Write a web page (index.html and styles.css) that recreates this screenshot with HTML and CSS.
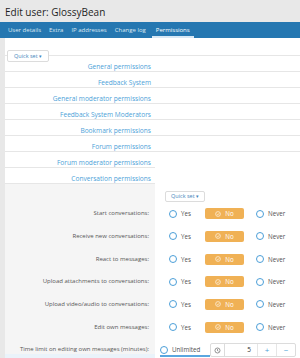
FILE: index.html
```html
<!DOCTYPE html>
<html lang="en">
<head>
    <meta charset="UTF-8" />
    <meta name="viewport" content="width=device-width, initial-scale=1.0" />
    <title>Edit user: GlossyBean</title>
    <link rel="stylesheet" href="styles.css">
</head>
<body>
    <h1 class="page-title">Edit user: GlossyBean</h1>

    <div class="tabs">
        <a class="tab">User details</a>
        <a class="tab">Extra</a>
        <a class="tab">IP addresses</a>
        <a class="tab">Change log</a>
        <a class="tab tab--active">Permissions</a>
    </div>

    <div class="block">
        <div class="block-top">
            <button class="quick-set">Quick set <span class="caret">&#9662;</span></button>
        </div>

        <!-- Permission groups -->
        <ul class="perm-list">
            <li class="perm-row"><span class="perm-link">General permissions</span></li>
            <li class="perm-row"><span class="perm-link">Feedback System</span></li>
            <li class="perm-row"><span class="perm-link">General moderator permissions</span></li>
            <li class="perm-row"><span class="perm-link">Feedback System Moderators</span></li>
            <li class="perm-row"><span class="perm-link">Bookmark permissions</span></li>
            <li class="perm-row"><span class="perm-link">Forum permissions</span></li>
            <li class="perm-row"><span class="perm-link">Forum moderator permissions</span></li>
            <li class="perm-row perm-row--last"><span class="perm-link">Conversation permissions</span></li>
        </ul>

        <div class="form-rows">
            <div class="form-row form-row--head">
                <div class="form-label"></div>
                <div class="form-input">
                    <button class="quick-set">Quick set <span class="caret">&#9662;</span></button>
                </div>
            </div>

            <div class="form-row">
                <div class="form-label">Start conversations:</div>
                <div class="form-input choices">
                    <span class="choice choice--yes"><i class="radio"></i>Yes</span>
                    <span class="choice choice--on"><svg class="check" viewBox="0 0 10 10"><circle cx="5" cy="5" r="4" /><path d="M3 5.2 L4.5 6.6 L7 3.8" /></svg>No</span>
                    <span class="choice"><i class="radio"></i>Never</span>
                </div>
            </div>

            <div class="form-row">
                <div class="form-label">Receive new conversations:</div>
                <div class="form-input choices">
                    <span class="choice choice--yes"><i class="radio"></i>Yes</span>
                    <span class="choice choice--on"><svg class="check" viewBox="0 0 10 10"><circle cx="5" cy="5" r="4" /><path d="M3 5.2 L4.5 6.6 L7 3.8" /></svg>No</span>
                    <span class="choice"><i class="radio"></i>Never</span>
                </div>
            </div>

            <div class="form-row">
                <div class="form-label">React to messages:</div>
                <div class="form-input choices">
                    <span class="choice choice--yes"><i class="radio"></i>Yes</span>
                    <span class="choice choice--on"><svg class="check" viewBox="0 0 10 10"><circle cx="5" cy="5" r="4" /><path d="M3 5.2 L4.5 6.6 L7 3.8" /></svg>No</span>
                    <span class="choice"><i class="radio"></i>Never</span>
                </div>
            </div>

            <div class="form-row">
                <div class="form-label">Upload attachments to conversations:</div>
                <div class="form-input choices">
                    <span class="choice choice--yes"><i class="radio"></i>Yes</span>
                    <span class="choice choice--on"><svg class="check" viewBox="0 0 10 10"><circle cx="5" cy="5" r="4" /><path d="M3 5.2 L4.5 6.6 L7 3.8" /></svg>No</span>
                    <span class="choice"><i class="radio"></i>Never</span>
                </div>
            </div>

            <div class="form-row">
                <div class="form-label">Upload video/audio to conversations:</div>
                <div class="form-input choices">
                    <span class="choice choice--yes"><i class="radio"></i>Yes</span>
                    <span class="choice choice--on"><svg class="check" viewBox="0 0 10 10"><circle cx="5" cy="5" r="4" /><path d="M3 5.2 L4.5 6.6 L7 3.8" /></svg>No</span>
                    <span class="choice"><i class="radio"></i>Never</span>
                </div>
            </div>

            <div class="form-row">
                <div class="form-label">Edit own messages:</div>
                <div class="form-input choices">
                    <span class="choice choice--yes"><i class="radio"></i>Yes</span>
                    <span class="choice choice--on"><svg class="check" viewBox="0 0 10 10"><circle cx="5" cy="5" r="4" /><path d="M3 5.2 L4.5 6.6 L7 3.8" /></svg>No</span>
                    <span class="choice"><i class="radio"></i>Never</span>
                </div>
            </div>

            <div class="form-row form-row--limit">
                <div class="form-label">Time limit on editing own messages (minutes):</div>
                <div class="form-input limit">
                    <span class="choice choice--unlimited"><i class="radio"></i>Unlimited</span>
                    <div class="number-box">
                        <svg class="num-icon" viewBox="0 0 10 10"><circle cx="5" cy="5" r="3.6" /><path d="M5 3 V5.2 L6.3 6" /></svg>
                        <span class="num-value">5</span>
                        <span class="num-btn">+</span>
                        <span class="num-btn">&minus;</span>
                    </div>
                </div>
            </div>

            <div class="form-row form-row--next">
                <div class="form-label"></div>
                <div class="form-input"><span class="next-bar"></span></div>
            </div>
        </div>
    </div>
</body>
</html>
```

FILE: styles.css
```css
/* General styles */
body {
    margin: 0;
    background: #e8e8e8;
    font-family: "Open Sans", "Noto Sans", sans-serif;
    color: #505050;
    overflow: hidden;
}

.page-title {
    margin: 0;
    padding: 5px 5px 0 5px;
    height: 17px;
    font-size: 10px;
    font-weight: normal;
    color: #1e1e1e;
}

.tabs {
    display: flex;
    height: 16px;
    background: #2577b1;
    padding-left: 4px;
}

.tab {
    padding: 0 4px;
    font-size: 6px;
    line-height: 16px;
    color: #dce8f2;
    box-sizing: border-box;
}

.tab--active {
    color: #fff;
    border-bottom: 2px solid #d8e8f5;
    margin-left: 2px;
}

.block {
    margin-left: 5px;
    background: #fff;
}

.block-top {
    height: 17px;
    padding: 3px 0 0 2px;
    box-sizing: border-box;
}

.quick-set {
    font-family: inherit;
    font-size: 5.5px;
    color: #3f85bb;
    background: #fff;
    border: 1px solid #dcdcdc;
    border-radius: 2px;
    height: 12px;
    padding: 0 6px;
    line-height: 10px;
}

.caret {
    font-size: 5px;
    color: #3f85bb;
}

/* Permission group list */
.perm-list {
    list-style: none;
    margin: 0;
    padding: 0;
}

.perm-row {
    height: 16px;
    border-top: 1px solid #e6e6e6;
    box-sizing: border-box;
    line-height: 15px;
}

.perm-row--last {
    width: 150px;
    height: 17px;
    border-bottom: 1px solid #e6e6e6;
}

.perm-link {
    display: inline-block;
    width: 146px;
    text-align: right;
    font-size: 6.6px;
    color: #4c9fd8;
}

/* Form rows */
.form-row {
    display: flex;
    height: 22.67px;
}

.form-row--head {
    height: 18.4px;
}

.form-label {
    width: 150px;
    flex-shrink: 0;
    background: #f5f5f5;
    text-align: right;
    padding-right: 6px;
    box-sizing: border-box;
    font-size: 6px;
    line-height: 22.67px;
    color: #555;
    white-space: nowrap;
}

.form-input {
    flex: 1;
    display: flex;
    align-items: center;
    padding-left: 10px;
}

.form-row--head .form-input {
    align-items: flex-start;
    padding-top: 7px;
}

.form-row--head .quick-set {
    height: 11px;
    padding: 0 5px;
    line-height: 9px;
}

.choices {
    padding-left: 14px;
}

.choice {
    display: flex;
    align-items: center;
    font-size: 6.2px;
    color: #505050;
    height: 11px;
}

.choice--yes {
    width: 36px;
}

.choice--on {
    width: 39px;
    justify-content: center;
    background: #f0b155;
    border-radius: 2px;
    color: #fff;
    margin-right: 12px;
}

.radio {
    width: 6px;
    height: 6px;
    border: 1px solid #4c9fd8;
    border-radius: 50%;
    margin-right: 4px;
}

.check {
    width: 6px;
    height: 6px;
    margin-right: 4px;
    fill: none;
    stroke: #fff;
    stroke-width: 1;
}

/* Time limit row */
.form-row--limit {
    height: 16px;
}

.form-row--limit .form-input {
    align-items: flex-start;
    padding-top: 5px;
}

.limit {
    padding-left: 5px;
}

.choice--unlimited {
    width: 50px;
    margin-top: 1px;
}

.number-box {
    display: flex;
    align-items: center;
    width: 86px;
    height: 14px;
    border: 1px solid #dcdcdc;
    border-radius: 2px;
    box-sizing: border-box;
    background: #fff;
}

.num-icon {
    width: 7px;
    height: 7px;
    margin: 0 3px;
    fill: none;
    stroke: #666;
    stroke-width: 1;
}

.num-value {
    flex: 1;
    text-align: right;
    padding-right: 6px;
    font-size: 6.5px;
    color: #333;
    border-left: 1px solid #dcdcdc;
    height: 100%;
    line-height: 12px;
}

.num-btn {
    width: 18px;
    text-align: center;
    font-size: 8px;
    color: #4c9fd8;
    border-left: 1px solid #e6e6e6;
    height: 100%;
    line-height: 12px;
}

.form-row--next .form-label {
    background: #eaf3fa;
}

.form-row--next .form-input {
    align-items: flex-start;
    padding-left: 0;
}

.next-bar {
    display: block;
    width: 50px;
    height: 2px;
    margin: 1px 0 0 5px;
    background: #5aa7e0;
}
```
